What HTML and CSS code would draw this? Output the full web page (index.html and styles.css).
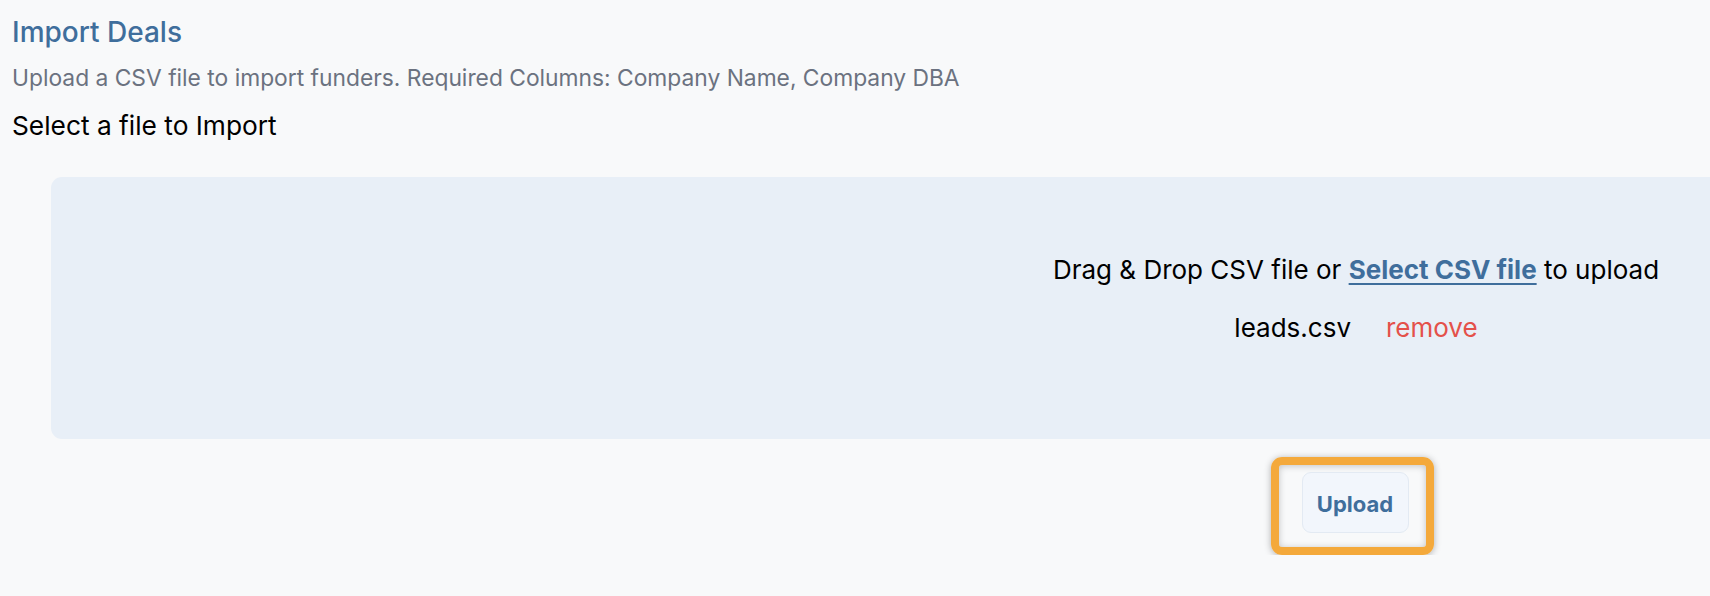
FILE: index.html
```html
<!DOCTYPE html>
<html lang="en">
<head>
<meta charset="utf-8">
<title>Import Deals</title>
<link rel="stylesheet" href="styles.css">
</head>
<body>
<main class="page">
  <h1 class="title">Import Deals</h1>
  <p class="subtitle">Upload a CSV file to import funders. Required Columns: Company Name, Company DBA</p>
  <p class="select-label">Select a file to Import</p>
  <section class="upload-area">
    <div class="dropzone">
      <p class="drop-text">Drag &amp; Drop CSV file or <a class="select-link" href="#">Select CSV file</a> to upload</p>
      <p class="file-row"><span class="file-name">leads.csv</span><a class="remove-link" href="#">remove</a></p>
    </div>
    <div class="actions">
      <div class="focus-ring">
        <button class="upload-btn" type="button">Upload</button>
      </div>
    </div>
  </section>
</main>
</body>
</html>
```

FILE: styles.css
```css
html, body {
  margin: 0;
  padding: 0;
  background: #f8f9fa;
  overflow: hidden;
}

body {
  font-family: Inter, "Noto Sans", "Liberation Sans", sans-serif;
  color: #111;
}

.page {
  padding: 16px 0 0 12px;
  display: flex;
  flex-direction: column;
}

.title {
  margin: 0;
  font-size: 28px;
  line-height: 32px;
  font-weight: 500;
  color: #3f6e9c;
}

.subtitle {
  margin: 17px 0 0;
  font-size: 22.8px;
  line-height: 26px;
  color: #6b7280;
}

.select-label {
  margin: 20px 0 0;
  font-size: 26.3px;
  line-height: 30px;
  color: #000;
}

.upload-area {
  margin: 36px 0 0 39px;
  width: 2610px;
  display: flex;
  flex-direction: column;
  align-items: center;
}

.dropzone {
  box-sizing: border-box;
  width: 100%;
  height: 262px;
  padding-top: 78px;
  background: #e8eff7;
  border-radius: 11px;
  display: flex;
  flex-direction: column;
  align-items: center;
}

.drop-text {
  margin: 0;
  font-size: 26px;
  line-height: 30px;
  color: #000;
}

.select-link {
  color: #3f6e9c;
  font-weight: 700;
  text-decoration: underline;
  text-decoration-thickness: 2px;
  text-underline-offset: 4px;
}

.file-row {
  margin: 28px 0 0;
  font-size: 26px;
  line-height: 30px;
  display: flex;
  gap: 35px;
}

.file-name {
  color: #000;
}

.remove-link {
  color: #e4514a;
  text-decoration: none;
}

.actions {
  margin-top: 18px;
  display: flex;
  justify-content: center;
}

.focus-ring {
  margin-right: 8px;
  border: 8px solid #f4a93b;
  border-radius: 11px;
  padding: 7px 17px 14px 23px;
  box-shadow: 0 1px 7px rgba(0, 0, 0, 0.3), inset 0 1px 7px rgba(0, 0, 0, 0.22);
  display: flex;
}

.upload-btn {
  width: 107px;
  height: 61px;
  padding: 2px 0 0;
  border: 1px solid #e3eaf3;
  border-radius: 9px;
  background: #f2f6fc;
  font-family: Inter, "Noto Sans", "Liberation Sans", sans-serif;
  font-size: 22px;
  font-weight: 700;
  color: #3f6e9c;
  cursor: pointer;
}
```
